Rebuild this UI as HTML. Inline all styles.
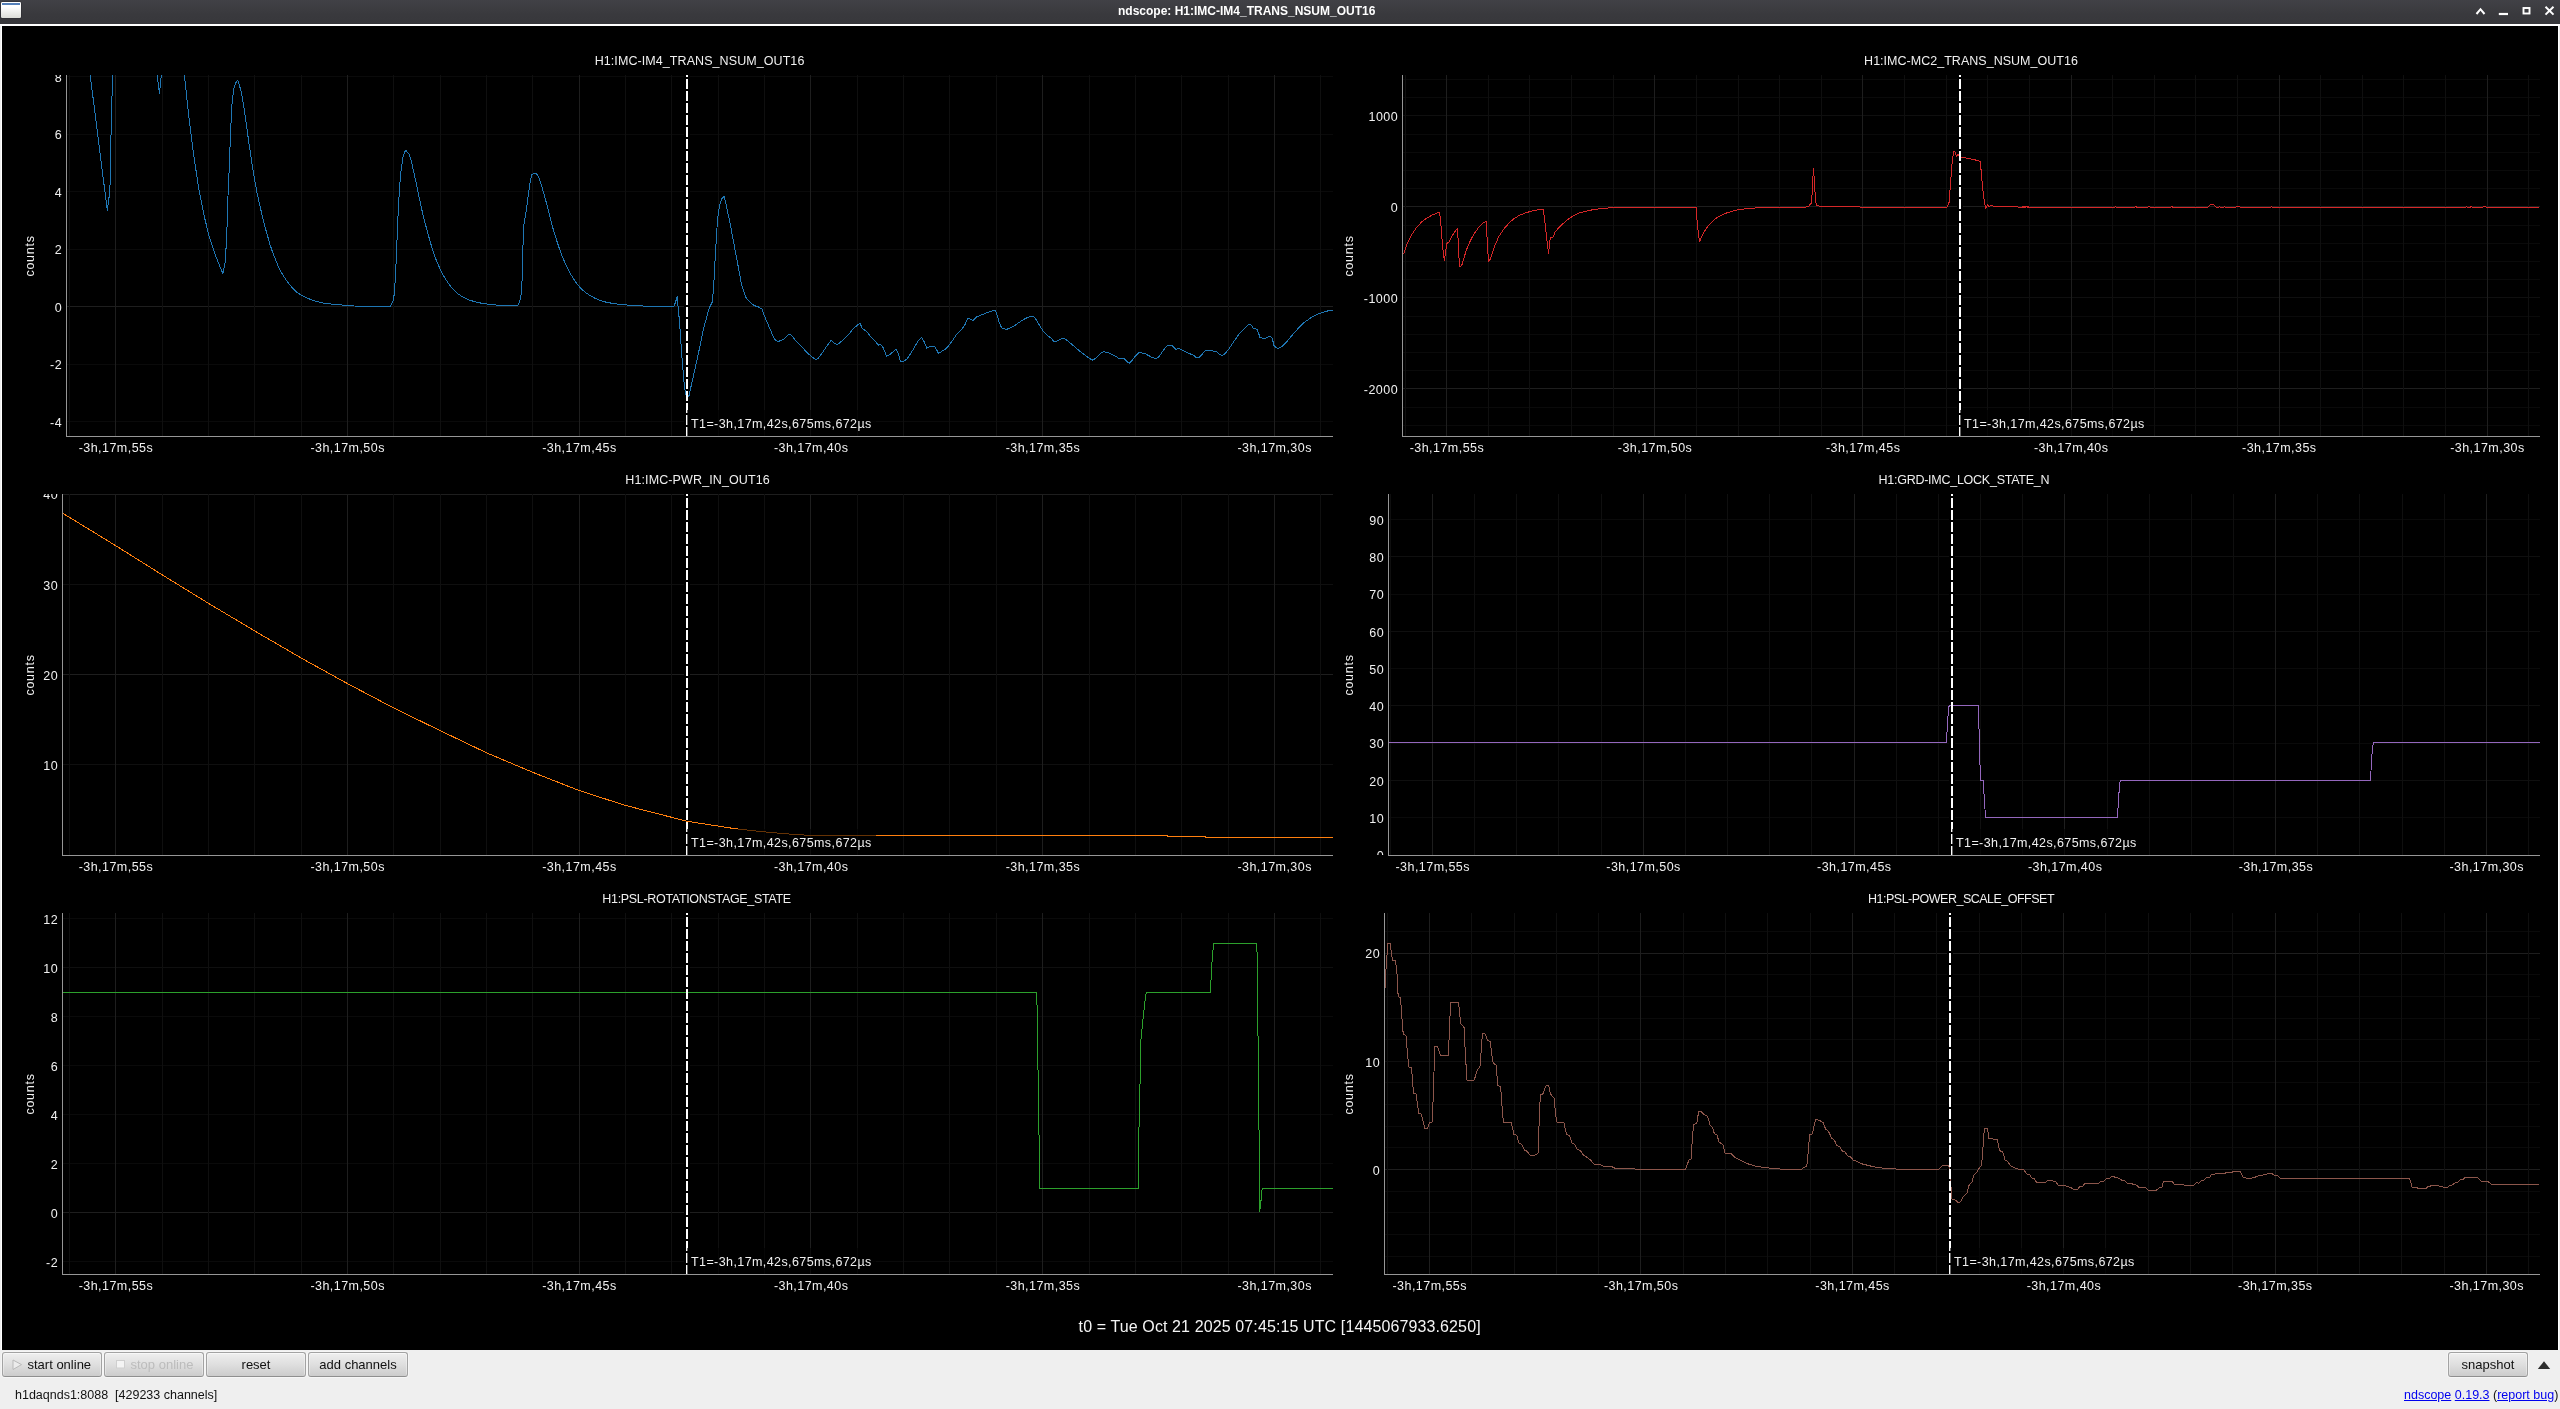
<!DOCTYPE html>
<html><head><meta charset="utf-8"><title>ndscope</title>
<style>
html,body{margin:0;padding:0}
body{width:2560px;height:1409px;position:relative;overflow:hidden;background:#efefef;font-family:"Liberation Sans", sans-serif;}
#tb{position:absolute;left:0;top:0;width:2560px;height:24px;background:linear-gradient(#414146,#39393d 60%,#37373b);}
#tbt{will-change:transform;position:absolute;left:1117.5px;top:0;height:24px;line-height:23px;white-space:nowrap;color:#fff;font-weight:bold;font-size:12px;letter-spacing:0px}
#wl{position:absolute;left:0;top:24px;width:2560px;height:2px;background:#fff}
#bl{position:absolute;left:1px;top:24px;width:1px;height:1326px;background:#fff}
#br{position:absolute;left:2558px;top:24px;width:1px;height:1326px;background:#fff}
#blk{position:absolute;left:2px;top:26px;width:2556px;height:1324px;background:#000}
.btn{will-change:transform;position:absolute;top:1352px;height:23px;border:1px solid #a3a3a3;border-bottom-color:#8f8f8f;border-radius:3px;background:linear-gradient(#efefef,#dedede 52%,#cccccc);box-shadow:inset 0 1px 0 #f8f8f8,inset 1px 0 0 rgba(255,255,255,.35),inset -1px 0 0 rgba(255,255,255,.35),0 0 0 1px rgba(255,255,255,.45);font-size:13px;color:#111;text-align:center;line-height:23px;white-space:nowrap}
.dis{color:#bcbcbc}
#st{will-change:transform;position:absolute;left:15px;top:1385px;font-size:12.5px;color:#111;white-space:pre;line-height:20px}
#lk{will-change:transform;position:absolute;right:2px;top:1385px;font-size:12.5px;color:#111;white-space:pre;line-height:20px}
#lk u{color:#0000ee}
</style></head><body>
<div id="tb"></div>
<svg style="position:absolute;left:0;top:0" width="40" height="24" viewBox="0 0 40 24">
<defs><linearGradient id="ig" x1="0" y1="0" x2="0" y2="1"><stop offset="0" stop-color="#fff"/><stop offset="0.3" stop-color="#fff"/><stop offset="1" stop-color="#dcddd8"/></linearGradient></defs>
<rect x="0.5" y="1.5" width="21" height="17" rx="1.5" fill="#2b2b30"/>
<rect x="1" y="2" width="20" height="16" rx="1.2" fill="url(#ig)"/>
<rect x="2" y="3" width="18" height="2" fill="#5580b9"/>
</svg>
<div id="tbt">ndscope: H1:IMC-IM4_TRANS_NSUM_OUT16</div>
<svg style="position:absolute;left:2470px;top:0" width="90" height="24" viewBox="2470 0 90 24" fill="none" stroke="#fff" stroke-width="2">
<path d="M2476.5 14 L2480.5 9.2 L2484.5 14"/>
<path d="M2498.8 14 H2508" stroke-width="2.2"/>
<rect x="2523.5" y="8" width="6" height="5.5" stroke-width="1.9"/>
<path d="M2545.5 6.7 L2553.5 14.6 M2553.5 6.7 L2545.5 14.6" stroke-width="2"/>
</svg>
<div id="wl"></div><div id="bl"></div><div id="br"></div>
<div id="blk"></div>
<svg width="2560" height="1409" viewBox="0 0 2560 1409" style="position:absolute;left:0;top:0;will-change:transform" font-family='"Liberation Sans", sans-serif'>
<defs>
<clipPath id="cp0"><rect x="67" y="75" width="1266" height="361"/></clipPath>
<clipPath id="ca0"><rect x="-4" y="75" width="70" height="361"/></clipPath>
<clipPath id="cp1"><rect x="63" y="494" width="1270" height="361"/></clipPath>
<clipPath id="ca1"><rect x="-8" y="494" width="70" height="361"/></clipPath>
<clipPath id="cp2"><rect x="63" y="913" width="1270" height="361"/></clipPath>
<clipPath id="ca2"><rect x="-8" y="913" width="70" height="361"/></clipPath>
<clipPath id="cp3"><rect x="1403" y="75" width="1137" height="361"/></clipPath>
<clipPath id="ca3"><rect x="1332" y="75" width="70" height="361"/></clipPath>
<clipPath id="cp4"><rect x="1389" y="494" width="1151" height="361"/></clipPath>
<clipPath id="ca4"><rect x="1318" y="494" width="70" height="361"/></clipPath>
<clipPath id="cp5"><rect x="1385" y="913" width="1155" height="361"/></clipPath>
<clipPath id="ca5"><rect x="1314" y="913" width="70" height="361"/></clipPath>
</defs>
<g shape-rendering="crispEdges">
<rect x="67" y="421" width="1266" height="1" fill="#0a0a0a"/>
<rect x="67" y="364" width="1266" height="1" fill="#0a0a0a"/>
<rect x="67" y="249" width="1266" height="1" fill="#0a0a0a"/>
<rect x="67" y="191" width="1266" height="1" fill="#0a0a0a"/>
<rect x="67" y="134" width="1266" height="1" fill="#0a0a0a"/>
<rect x="67" y="76" width="1266" height="1" fill="#0a0a0a"/>
<rect x="67" y="306" width="1266" height="1" fill="#1e1e1e"/>
<rect x="69" y="75" width="1" height="361" fill="#0f0f0f"/>
<rect x="115" y="75" width="1" height="361" fill="#1e1e1e"/>
<rect x="162" y="75" width="1" height="361" fill="#0f0f0f"/>
<rect x="208" y="75" width="1" height="361" fill="#0f0f0f"/>
<rect x="254" y="75" width="1" height="361" fill="#0f0f0f"/>
<rect x="301" y="75" width="1" height="361" fill="#0f0f0f"/>
<rect x="347" y="75" width="1" height="361" fill="#1e1e1e"/>
<rect x="393" y="75" width="1" height="361" fill="#0f0f0f"/>
<rect x="440" y="75" width="1" height="361" fill="#0f0f0f"/>
<rect x="486" y="75" width="1" height="361" fill="#0f0f0f"/>
<rect x="532" y="75" width="1" height="361" fill="#0f0f0f"/>
<rect x="579" y="75" width="1" height="361" fill="#1e1e1e"/>
<rect x="625" y="75" width="1" height="361" fill="#0f0f0f"/>
<rect x="671" y="75" width="1" height="361" fill="#0f0f0f"/>
<rect x="718" y="75" width="1" height="361" fill="#0f0f0f"/>
<rect x="764" y="75" width="1" height="361" fill="#0f0f0f"/>
<rect x="810" y="75" width="1" height="361" fill="#1e1e1e"/>
<rect x="857" y="75" width="1" height="361" fill="#0f0f0f"/>
<rect x="903" y="75" width="1" height="361" fill="#0f0f0f"/>
<rect x="949" y="75" width="1" height="361" fill="#0f0f0f"/>
<rect x="996" y="75" width="1" height="361" fill="#0f0f0f"/>
<rect x="1042" y="75" width="1" height="361" fill="#1e1e1e"/>
<rect x="1089" y="75" width="1" height="361" fill="#0f0f0f"/>
<rect x="1135" y="75" width="1" height="361" fill="#0f0f0f"/>
<rect x="1181" y="75" width="1" height="361" fill="#0f0f0f"/>
<rect x="1228" y="75" width="1" height="361" fill="#0f0f0f"/>
<rect x="1274" y="75" width="1" height="361" fill="#1e1e1e"/>
<rect x="1320" y="75" width="1" height="361" fill="#0f0f0f"/>
<rect x="684" y="75" width="6" height="361" fill="#000"/>
</g>
<g clip-path="url(#cp0)" fill="none" stroke="#1f77b4" stroke-width="1" shape-rendering="crispEdges" stroke-linejoin="bevel">
<polyline points="90.2,75.3 107.3,210.5 109.9,190.8 110.7,148.8 111.7,104.1 112.8,75.3"/>
<polyline points="157.1,75.3 159.5,93.6 161.3,75.3"/>
<polyline points="184.4,75.3 188.6,114.6 193.9,156.6 199.1,190.8 204.4,217.0 209.6,238.0 214.9,253.8 220.1,266.9 222.8,273.5 225.4,261.7 227.0,227.5 228.0,196.0 229.3,167.1 230.6,130.4 232.0,104.1 233.8,88.4 235.9,82.6 237.7,80.0 241.1,91.0 243.8,106.8 246.4,125.1 249.0,143.5 251.7,161.9 254.3,177.6 256.9,192.1 259.5,203.9 262.2,215.7 264.8,226.2 267.4,235.4 270.0,244.6 272.7,252.5 275.3,259.0 277.9,265.6 280.5,270.8 283.2,275.6 285.8,279.5 288.4,283.2 291.0,286.3 293.7,289.2 296.3,291.8 301.5,295.3 306.8,297.9 312.0,300.0 317.3,301.6 322.5,302.9 327.8,303.7 335.7,304.4 343.5,305.2 354.0,306.0 364.5,306.3 375.0,306.3 390.3,306.3 390.5,306.3 393.1,301.0 394.4,293.2 395.8,269.5 397.1,238.0 398.4,206.5 400.5,175.0 403.1,156.6 405.5,150.1 408.9,154.0 411.5,161.9 414.1,173.7 416.8,185.5 419.4,198.6 422.0,210.5 424.6,221.0 427.3,231.5 429.9,240.6 432.5,249.8 435.1,257.2 437.8,263.8 440.4,269.5 443.0,274.8 445.6,279.2 448.3,283.2 450.9,286.6 453.5,289.5 456.1,292.1 458.8,294.5 464.0,297.6 469.3,300.0 474.5,301.6 479.8,302.9 485.0,303.7 492.9,304.7 500.8,305.5 511.3,305.8 517.8,305.5 519.9,301.0 521.8,290.5 522.6,253.8 523.9,224.9 525.7,214.4 527.5,201.3 529.6,185.5 531.7,175.0 533.6,173.2 536.2,173.2 538.8,177.6 541.5,185.5 544.1,194.7 546.7,203.9 549.3,214.4 552.0,224.9 554.6,234.1 557.2,242.0 559.8,249.8 562.5,256.9 565.1,263.0 567.7,268.7 570.3,273.5 573.0,277.9 575.6,281.9 578.2,285.3 580.8,288.2 583.5,290.8 586.1,292.9 590.0,295.5 595.3,298.4 600.5,300.5 605.8,302.1 611.0,303.1 616.3,303.9 624.2,304.7 632.0,305.5 642.5,306.0 655.7,306.3 674.0,306.3 675.9,301.0 677.2,296.3 678.0,306.3 679.3,319.4 681.9,356.2 684.5,387.7 685.8,394.2 688.7,396.9 693.1,377.2 698.4,353.5 703.6,328.6 708.9,308.9 712.3,301.8 713.6,287.9 715.4,253.8 717.5,219.6 719.4,206.5 721.5,199.2 724.1,196.3 725.9,203.9 729.9,222.3 733.8,243.3 737.8,264.3 741.7,285.3 745.6,297.1 750.9,303.1 754.8,305.8 758.8,307.1 761.9,308.9 765.3,318.1 769.3,327.3 773.2,336.5 775.8,340.9 779.2,341.2 783.7,339.1 789.0,333.8 791.6,335.2 795.5,340.4 800.8,345.7 807.3,353.0 811.3,356.2 815.2,359.3 817.8,358.8 821.8,353.5 827.0,345.7 831.0,340.4 834.9,343.6 837.5,344.4 842.8,340.4 848.0,335.2 853.3,328.6 859.8,323.1 862.5,328.6 866.4,331.2 871.7,337.8 875.6,341.7 878.2,345.1 880.8,344.4 883.5,348.3 886.6,356.2 890.0,354.3 892.7,352.2 895.8,349.1 897.9,352.2 900.5,361.4 903.2,361.9 907.1,358.8 912.3,350.9 917.6,341.7 921.5,337.3 924.2,341.7 926.8,348.3 930.7,346.2 934.7,346.2 938.6,353.5 942.5,350.9 946.5,348.3 951.7,341.7 957.0,333.8 962.2,328.6 964.9,324.7 968.0,318.1 970.1,318.9 972.7,320.7 976.7,316.8 981.9,314.7 988.5,312.1 995.0,310.2 996.9,314.2 999.0,322.0 1001.6,327.8 1002.6,328.6 1006.6,329.4 1011.8,327.3 1017.1,323.9 1022.3,320.2 1026.3,318.1 1030.2,316.3 1033.6,316.3 1036.8,320.7 1039.4,325.2 1043.3,331.2 1047.3,335.2 1051.2,338.3 1053.8,341.2 1056.4,341.2 1059.9,339.6 1063.0,338.3 1065.6,339.1 1069.6,342.5 1073.5,345.7 1078.8,350.4 1084.0,354.3 1089.3,358.3 1092.4,360.1 1095.0,358.8 1098.5,355.4 1101.1,352.8 1103.7,351.7 1107.6,352.5 1111.6,354.3 1115.5,356.2 1119.5,358.8 1122.9,358.8 1123.9,358.3 1126.0,360.6 1129.2,363.3 1131.8,360.9 1135.2,356.2 1138.6,352.8 1141.8,353.0 1144.9,353.5 1148.3,355.4 1152.3,357.5 1155.7,358.8 1158.3,357.5 1161.5,353.0 1164.9,348.3 1167.5,345.7 1170.1,345.1 1172.0,345.7 1174.6,348.3 1176.4,349.6 1178.5,348.3 1181.1,349.6 1185.1,351.7 1189.0,353.5 1193.0,354.9 1196.9,358.0 1199.5,357.0 1202.2,354.3 1204.8,350.9 1207.4,350.1 1211.3,350.4 1214.0,351.2 1216.6,351.4 1219.2,354.1 1221.8,355.6 1224.5,354.1 1228.4,349.6 1233.7,341.7 1238.9,334.4 1244.2,328.6 1248.9,324.1 1251.5,325.4 1253.3,328.6 1256.8,329.1 1258.6,333.3 1259.9,337.3 1262.5,338.3 1265.7,338.3 1268.3,336.7 1270.9,336.5 1272.5,339.1 1273.8,345.1 1276.2,347.8 1278.3,348.3 1282.2,346.2 1287.5,340.9 1292.7,334.6 1298.0,328.6 1303.2,323.3 1308.5,319.4 1313.7,316.0 1319.0,313.6 1325.5,311.5 1329.5,310.5 1332.9,310.2"/>
</g>
<g clip-path="url(#cp0)"><line x1="687" y1="67" x2="687" y2="436" stroke="#fff" stroke-width="2" stroke-dasharray="10 2" shape-rendering="crispEdges"/>
<rect x="687" y="410" width="189" height="26" fill="#000" fill-opacity="0.6"/></g>
<text x="691" y="428.4" font-size="12.5" fill="#f0f0f0" textLength="180.3" lengthAdjust="spacing">T1=-3h,17m,42s,675ms,672µs</text>
<rect x="66" y="75" width="1" height="362" fill="#969696" shape-rendering="crispEdges"/>
<rect x="66" y="436" width="1267" height="1" fill="#969696" shape-rendering="crispEdges"/>
<g clip-path="url(#ca0)" font-size="12.5" fill="#f0f0f0" text-anchor="end" letter-spacing="0.45">
<text x="62.1" y="81.9">8</text>
<text x="62.1" y="139.4">6</text>
<text x="62.1" y="196.9">4</text>
<text x="62.1" y="254.4">2</text>
<text x="62.1" y="311.9">0</text>
<text x="62.1" y="369.4">-2</text>
<text x="62.1" y="426.9">-4</text>
</g>
<g font-size="12.5" fill="#f0f0f0" text-anchor="middle">
<text x="115.7" y="452" textLength="74" lengthAdjust="spacing">-3h,17m,55s</text>
<text x="347.4" y="452" textLength="74" lengthAdjust="spacing">-3h,17m,50s</text>
<text x="579.2" y="452" textLength="74" lengthAdjust="spacing">-3h,17m,45s</text>
<text x="810.9" y="452" textLength="74" lengthAdjust="spacing">-3h,17m,40s</text>
<text x="1042.7" y="452" textLength="74" lengthAdjust="spacing">-3h,17m,35s</text>
<text x="1274.4" y="452" textLength="74" lengthAdjust="spacing">-3h,17m,30s</text>
</g>
<text x="699.5" y="64.9" font-size="12.5" fill="#f0f0f0" text-anchor="middle" textLength="209.7" lengthAdjust="spacing">H1:IMC-IM4_TRANS_NSUM_OUT16</text>
<text transform="translate(34,256.3) rotate(-90)" font-size="12.5" fill="#f0f0f0" text-anchor="middle" textLength="40.5" lengthAdjust="spacing">counts</text>
<g shape-rendering="crispEdges">
<rect x="63" y="764" width="1270" height="1" fill="#0f0f0f"/>
<rect x="63" y="584" width="1270" height="1" fill="#0f0f0f"/>
<rect x="63" y="674" width="1270" height="1" fill="#1e1e1e"/>
<rect x="63" y="494" width="1270" height="1" fill="#1e1e1e"/>
<rect x="69" y="494" width="1" height="361" fill="#0f0f0f"/>
<rect x="115" y="494" width="1" height="361" fill="#1e1e1e"/>
<rect x="162" y="494" width="1" height="361" fill="#0f0f0f"/>
<rect x="208" y="494" width="1" height="361" fill="#0f0f0f"/>
<rect x="254" y="494" width="1" height="361" fill="#0f0f0f"/>
<rect x="301" y="494" width="1" height="361" fill="#0f0f0f"/>
<rect x="347" y="494" width="1" height="361" fill="#1e1e1e"/>
<rect x="393" y="494" width="1" height="361" fill="#0f0f0f"/>
<rect x="440" y="494" width="1" height="361" fill="#0f0f0f"/>
<rect x="486" y="494" width="1" height="361" fill="#0f0f0f"/>
<rect x="532" y="494" width="1" height="361" fill="#0f0f0f"/>
<rect x="579" y="494" width="1" height="361" fill="#1e1e1e"/>
<rect x="625" y="494" width="1" height="361" fill="#0f0f0f"/>
<rect x="671" y="494" width="1" height="361" fill="#0f0f0f"/>
<rect x="718" y="494" width="1" height="361" fill="#0f0f0f"/>
<rect x="764" y="494" width="1" height="361" fill="#0f0f0f"/>
<rect x="810" y="494" width="1" height="361" fill="#1e1e1e"/>
<rect x="857" y="494" width="1" height="361" fill="#0f0f0f"/>
<rect x="903" y="494" width="1" height="361" fill="#0f0f0f"/>
<rect x="949" y="494" width="1" height="361" fill="#0f0f0f"/>
<rect x="996" y="494" width="1" height="361" fill="#0f0f0f"/>
<rect x="1042" y="494" width="1" height="361" fill="#1e1e1e"/>
<rect x="1089" y="494" width="1" height="361" fill="#0f0f0f"/>
<rect x="1135" y="494" width="1" height="361" fill="#0f0f0f"/>
<rect x="1181" y="494" width="1" height="361" fill="#0f0f0f"/>
<rect x="1228" y="494" width="1" height="361" fill="#0f0f0f"/>
<rect x="1274" y="494" width="1" height="361" fill="#1e1e1e"/>
<rect x="1320" y="494" width="1" height="361" fill="#0f0f0f"/>
<rect x="684" y="494" width="6" height="361" fill="#000"/>
</g>
<g clip-path="url(#cp1)" fill="none" stroke="#ff7f0e" stroke-width="1" shape-rendering="crispEdges" stroke-linejoin="bevel">
<polyline points="62.7,513.2 115.6,545.6 162.4,575.0 208.3,603.2 254.6,630.9 301.1,658.0 347.3,683.5 393.5,707.9 440.1,730.6 486.3,752.7 532.2,772.1 579.3,790.6 625.0,805.3 671.2,817.2 686.5,821.1 700.0,823.3 735.0,828.7 764.3,831.9 790.4,834.1 811.0,835.5 1167.0,835.5 1168.0,836.5 1205.0,836.5 1206.0,837.5 1333.0,837.5"/>
</g>
<g clip-path="url(#cp1)"><line x1="687" y1="486" x2="687" y2="855" stroke="#fff" stroke-width="2" stroke-dasharray="10 2" shape-rendering="crispEdges"/>
<rect x="687" y="829" width="189" height="26" fill="#000" fill-opacity="0.6"/></g>
<text x="691" y="847.4" font-size="12.5" fill="#f0f0f0" textLength="180.3" lengthAdjust="spacing">T1=-3h,17m,42s,675ms,672µs</text>
<rect x="62" y="494" width="1" height="362" fill="#969696" shape-rendering="crispEdges"/>
<rect x="62" y="855" width="1271" height="1" fill="#969696" shape-rendering="crispEdges"/>
<g clip-path="url(#ca1)" font-size="12.5" fill="#f0f0f0" text-anchor="end" letter-spacing="0.45">
<text x="58.1" y="499.4">40</text>
<text x="58.1" y="589.6">30</text>
<text x="58.1" y="679.8">20</text>
<text x="58.1" y="770.0">10</text>
</g>
<g font-size="12.5" fill="#f0f0f0" text-anchor="middle">
<text x="115.7" y="871" textLength="74" lengthAdjust="spacing">-3h,17m,55s</text>
<text x="347.4" y="871" textLength="74" lengthAdjust="spacing">-3h,17m,50s</text>
<text x="579.2" y="871" textLength="74" lengthAdjust="spacing">-3h,17m,45s</text>
<text x="810.9" y="871" textLength="74" lengthAdjust="spacing">-3h,17m,40s</text>
<text x="1042.7" y="871" textLength="74" lengthAdjust="spacing">-3h,17m,35s</text>
<text x="1274.4" y="871" textLength="74" lengthAdjust="spacing">-3h,17m,30s</text>
</g>
<text x="697.5" y="483.9" font-size="12.5" fill="#f0f0f0" text-anchor="middle" textLength="144.5" lengthAdjust="spacing">H1:IMC-PWR_IN_OUT16</text>
<text transform="translate(34,675.3) rotate(-90)" font-size="12.5" fill="#f0f0f0" text-anchor="middle" textLength="40.5" lengthAdjust="spacing">counts</text>
<g shape-rendering="crispEdges">
<rect x="63" y="1261" width="1270" height="1" fill="#0a0a0a"/>
<rect x="63" y="1163" width="1270" height="1" fill="#0a0a0a"/>
<rect x="63" y="1114" width="1270" height="1" fill="#0a0a0a"/>
<rect x="63" y="1065" width="1270" height="1" fill="#0a0a0a"/>
<rect x="63" y="1016" width="1270" height="1" fill="#0a0a0a"/>
<rect x="63" y="918" width="1270" height="1" fill="#0a0a0a"/>
<rect x="63" y="967" width="1270" height="1" fill="#0f0f0f"/>
<rect x="63" y="1212" width="1270" height="1" fill="#1e1e1e"/>
<rect x="69" y="913" width="1" height="361" fill="#0f0f0f"/>
<rect x="115" y="913" width="1" height="361" fill="#1e1e1e"/>
<rect x="162" y="913" width="1" height="361" fill="#0f0f0f"/>
<rect x="208" y="913" width="1" height="361" fill="#0f0f0f"/>
<rect x="254" y="913" width="1" height="361" fill="#0f0f0f"/>
<rect x="301" y="913" width="1" height="361" fill="#0f0f0f"/>
<rect x="347" y="913" width="1" height="361" fill="#1e1e1e"/>
<rect x="393" y="913" width="1" height="361" fill="#0f0f0f"/>
<rect x="440" y="913" width="1" height="361" fill="#0f0f0f"/>
<rect x="486" y="913" width="1" height="361" fill="#0f0f0f"/>
<rect x="532" y="913" width="1" height="361" fill="#0f0f0f"/>
<rect x="579" y="913" width="1" height="361" fill="#1e1e1e"/>
<rect x="625" y="913" width="1" height="361" fill="#0f0f0f"/>
<rect x="671" y="913" width="1" height="361" fill="#0f0f0f"/>
<rect x="718" y="913" width="1" height="361" fill="#0f0f0f"/>
<rect x="764" y="913" width="1" height="361" fill="#0f0f0f"/>
<rect x="810" y="913" width="1" height="361" fill="#1e1e1e"/>
<rect x="857" y="913" width="1" height="361" fill="#0f0f0f"/>
<rect x="903" y="913" width="1" height="361" fill="#0f0f0f"/>
<rect x="949" y="913" width="1" height="361" fill="#0f0f0f"/>
<rect x="996" y="913" width="1" height="361" fill="#0f0f0f"/>
<rect x="1042" y="913" width="1" height="361" fill="#1e1e1e"/>
<rect x="1089" y="913" width="1" height="361" fill="#0f0f0f"/>
<rect x="1135" y="913" width="1" height="361" fill="#0f0f0f"/>
<rect x="1181" y="913" width="1" height="361" fill="#0f0f0f"/>
<rect x="1228" y="913" width="1" height="361" fill="#0f0f0f"/>
<rect x="1274" y="913" width="1" height="361" fill="#1e1e1e"/>
<rect x="1320" y="913" width="1" height="361" fill="#0f0f0f"/>
<rect x="684" y="913" width="6" height="361" fill="#000"/>
</g>
<g clip-path="url(#cp2)" fill="none" stroke="#2ca02c" stroke-width="1" shape-rendering="crispEdges" stroke-linejoin="bevel">
<polyline points="61.4,992.1 1036.4,992.1 1037.3,1010.7 1038.1,1077.1 1039.2,1146.3 1039.5,1188.3 1138.3,1188.3 1138.6,1143.5 1139.9,1090.9 1140.8,1041.1 1143.3,1016.2 1145.2,999.6 1146.3,992.1 1210.5,992.1 1211.6,966.4 1213.3,947.0 1213.8,943.4 1256.4,943.4 1257.5,958.1 1258.1,1049.4 1259.2,1146.3 1259.7,1212.1 1260.9,1201.6 1262.2,1188.3 1332.8,1188.3"/>
</g>
<g clip-path="url(#cp2)"><line x1="687" y1="905" x2="687" y2="1274" stroke="#fff" stroke-width="2" stroke-dasharray="10 2" shape-rendering="crispEdges"/>
<rect x="687" y="1248" width="189" height="26" fill="#000" fill-opacity="0.6"/></g>
<text x="691" y="1266.4" font-size="12.5" fill="#f0f0f0" textLength="180.3" lengthAdjust="spacing">T1=-3h,17m,42s,675ms,672µs</text>
<rect x="62" y="913" width="1" height="362" fill="#969696" shape-rendering="crispEdges"/>
<rect x="62" y="1274" width="1271" height="1" fill="#969696" shape-rendering="crispEdges"/>
<g clip-path="url(#ca2)" font-size="12.5" fill="#f0f0f0" text-anchor="end" letter-spacing="0.45">
<text x="58.1" y="923.9">12</text>
<text x="58.1" y="972.9">10</text>
<text x="58.1" y="1021.9">8</text>
<text x="58.1" y="1070.9">6</text>
<text x="58.1" y="1119.9">4</text>
<text x="58.1" y="1168.9">2</text>
<text x="58.1" y="1217.9">0</text>
<text x="58.1" y="1266.9">-2</text>
</g>
<g font-size="12.5" fill="#f0f0f0" text-anchor="middle">
<text x="115.7" y="1290" textLength="74" lengthAdjust="spacing">-3h,17m,55s</text>
<text x="347.4" y="1290" textLength="74" lengthAdjust="spacing">-3h,17m,50s</text>
<text x="579.2" y="1290" textLength="74" lengthAdjust="spacing">-3h,17m,45s</text>
<text x="810.9" y="1290" textLength="74" lengthAdjust="spacing">-3h,17m,40s</text>
<text x="1042.7" y="1290" textLength="74" lengthAdjust="spacing">-3h,17m,35s</text>
<text x="1274.4" y="1290" textLength="74" lengthAdjust="spacing">-3h,17m,30s</text>
</g>
<text x="696.7" y="902.9" font-size="12.5" fill="#f0f0f0" text-anchor="middle" textLength="188.8" lengthAdjust="spacing">H1:PSL-ROTATIONSTAGE_STATE</text>
<text transform="translate(34,1094.3) rotate(-90)" font-size="12.5" fill="#f0f0f0" text-anchor="middle" textLength="40.5" lengthAdjust="spacing">counts</text>
<g shape-rendering="crispEdges">
<rect x="1403" y="425" width="1137" height="1" fill="#0a0a0a"/>
<rect x="1403" y="407" width="1137" height="1" fill="#0a0a0a"/>
<rect x="1403" y="370" width="1137" height="1" fill="#0a0a0a"/>
<rect x="1403" y="352" width="1137" height="1" fill="#0a0a0a"/>
<rect x="1403" y="334" width="1137" height="1" fill="#0a0a0a"/>
<rect x="1403" y="316" width="1137" height="1" fill="#0a0a0a"/>
<rect x="1403" y="279" width="1137" height="1" fill="#0a0a0a"/>
<rect x="1403" y="261" width="1137" height="1" fill="#0a0a0a"/>
<rect x="1403" y="243" width="1137" height="1" fill="#0a0a0a"/>
<rect x="1403" y="225" width="1137" height="1" fill="#0a0a0a"/>
<rect x="1403" y="188" width="1137" height="1" fill="#0a0a0a"/>
<rect x="1403" y="170" width="1137" height="1" fill="#0a0a0a"/>
<rect x="1403" y="152" width="1137" height="1" fill="#0a0a0a"/>
<rect x="1403" y="134" width="1137" height="1" fill="#0a0a0a"/>
<rect x="1403" y="97" width="1137" height="1" fill="#0a0a0a"/>
<rect x="1403" y="79" width="1137" height="1" fill="#0a0a0a"/>
<rect x="1403" y="115" width="1137" height="1" fill="#0f0f0f"/>
<rect x="1403" y="297" width="1137" height="1" fill="#0f0f0f"/>
<rect x="1403" y="206" width="1137" height="1" fill="#1e1e1e"/>
<rect x="1403" y="388" width="1137" height="1" fill="#1e1e1e"/>
<rect x="1405" y="75" width="1" height="361" fill="#0f0f0f"/>
<rect x="1446" y="75" width="1" height="361" fill="#1e1e1e"/>
<rect x="1488" y="75" width="1" height="361" fill="#0f0f0f"/>
<rect x="1529" y="75" width="1" height="361" fill="#0f0f0f"/>
<rect x="1571" y="75" width="1" height="361" fill="#0f0f0f"/>
<rect x="1613" y="75" width="1" height="361" fill="#0f0f0f"/>
<rect x="1654" y="75" width="1" height="361" fill="#1e1e1e"/>
<rect x="1696" y="75" width="1" height="361" fill="#0f0f0f"/>
<rect x="1738" y="75" width="1" height="361" fill="#0f0f0f"/>
<rect x="1779" y="75" width="1" height="361" fill="#0f0f0f"/>
<rect x="1821" y="75" width="1" height="361" fill="#0f0f0f"/>
<rect x="1862" y="75" width="1" height="361" fill="#1e1e1e"/>
<rect x="1904" y="75" width="1" height="361" fill="#0f0f0f"/>
<rect x="1946" y="75" width="1" height="361" fill="#0f0f0f"/>
<rect x="1987" y="75" width="1" height="361" fill="#0f0f0f"/>
<rect x="2029" y="75" width="1" height="361" fill="#0f0f0f"/>
<rect x="2071" y="75" width="1" height="361" fill="#1e1e1e"/>
<rect x="2112" y="75" width="1" height="361" fill="#0f0f0f"/>
<rect x="2154" y="75" width="1" height="361" fill="#0f0f0f"/>
<rect x="2195" y="75" width="1" height="361" fill="#0f0f0f"/>
<rect x="2237" y="75" width="1" height="361" fill="#0f0f0f"/>
<rect x="2279" y="75" width="1" height="361" fill="#1e1e1e"/>
<rect x="2320" y="75" width="1" height="361" fill="#0f0f0f"/>
<rect x="2362" y="75" width="1" height="361" fill="#0f0f0f"/>
<rect x="2403" y="75" width="1" height="361" fill="#0f0f0f"/>
<rect x="2445" y="75" width="1" height="361" fill="#0f0f0f"/>
<rect x="2487" y="75" width="1" height="361" fill="#1e1e1e"/>
<rect x="2528" y="75" width="1" height="361" fill="#0f0f0f"/>
<rect x="1957" y="75" width="6" height="361" fill="#000"/>
</g>
<g clip-path="url(#cp3)" fill="none" stroke="#d62728" stroke-width="1" shape-rendering="crispEdges" stroke-linejoin="bevel">
<polyline points="1403.7,253.8 1406.8,244.6 1410.8,236.2 1416.0,228.3 1421.3,222.3 1426.5,218.3 1431.8,215.2 1437.0,213.1 1439.6,212.3 1440.9,224.9 1442.8,248.5 1444.4,260.9 1445.7,251.1 1446.7,243.3 1448.8,242.5 1450.9,238.0 1454.1,232.8 1457.5,228.3 1458.3,243.3 1459.3,264.3 1460.1,266.9 1461.9,264.8 1463.8,259.0 1465.9,251.1 1469.8,242.0 1473.8,234.1 1479.0,227.0 1482.9,223.1 1486.1,221.2 1487.2,240.6 1488.5,261.7 1490.0,259.6 1492.1,253.8 1494.8,245.9 1498.7,236.7 1504.0,228.8 1509.2,222.8 1514.5,218.3 1519.7,215.2 1526.3,212.6 1534.1,210.5 1543.3,209.1 1544.6,219.6 1546.7,238.0 1548.6,253.8 1549.4,244.6 1550.4,237.5 1553.3,237.0 1555.1,232.0 1557.8,228.8 1563.0,223.6 1568.3,219.1 1573.5,215.7 1578.8,213.1 1586.7,211.0 1594.5,209.4 1602.4,208.4 1612.9,207.6 1631.3,207.3 1657.5,207.3 1696.1,207.3 1697.4,224.9 1699.5,242.0 1700.9,238.0 1703.5,232.8 1707.4,227.0 1711.4,222.3 1716.6,217.8 1721.9,214.9 1727.1,212.8 1731.0,211.8 1734.1,210.5 1744.6,208.9 1757.8,207.8 1778.8,207.3 1805.0,207.3 1809.0,206.0 1811.6,202.6 1812.4,188.1 1813.4,167.7 1814.5,182.9 1815.5,201.3 1816.8,205.2 1820.8,206.5 1857.5,206.5 1861.5,207.3 1946.8,207.3 1948.9,203.9 1950.2,188.1 1952.0,164.5 1953.6,150.9 1954.7,151.4 1956.5,156.6 1958.1,154.5 1959.9,157.2 1965.2,157.9 1973.0,159.3 1978.3,160.8 1980.4,161.9 1981.7,177.6 1983.5,196.0 1985.6,209.1 1987.5,204.7 1988.8,207.0 1990.9,205.2 1994.0,206.5 2015.0,206.8 2022.9,207.3 2026.3,206.3 2029.5,207.3 2040.0,207.3 2021.9,206.9 2022.8,207.5 2025.2,207.5 2026.0,206.4 2027.6,206.4 2028.4,207.3 2114.9,207.3 2115.5,206.4 2116.4,207.3 2134.5,207.3 2135.6,206.4 2137.0,207.3 2147.7,207.3 2149.0,206.4 2150.3,207.3 2170.6,207.3 2171.7,206.4 2173.0,207.3 2207.8,207.3 2210.0,205.1 2212.2,204.3 2214.0,204.9 2216.6,207.3 2218.8,207.3 2219.4,206.4 2220.3,207.3 2223.6,207.3 2224.5,206.4 2225.3,207.3 2235.8,207.3 2237.1,206.4 2239.3,206.4 2240.2,207.3 2270.6,207.3 2271.3,206.4 2272.2,207.3 2465.5,207.3 2466.4,206.4 2467.5,207.3 2470.4,207.3 2471.2,206.4 2472.1,207.3 2482.4,207.3 2483.5,206.4 2485.2,206.4 2486.3,207.3 2539.3,207.3"/>
</g>
<g clip-path="url(#cp3)"><line x1="1960" y1="67" x2="1960" y2="436" stroke="#fff" stroke-width="2" stroke-dasharray="10 2" shape-rendering="crispEdges"/>
<rect x="1960" y="410" width="189" height="26" fill="#000" fill-opacity="0.6"/></g>
<text x="1964" y="428.4" font-size="12.5" fill="#f0f0f0" textLength="180.3" lengthAdjust="spacing">T1=-3h,17m,42s,675ms,672µs</text>
<rect x="1402" y="75" width="1" height="362" fill="#969696" shape-rendering="crispEdges"/>
<rect x="1402" y="436" width="1138" height="1" fill="#969696" shape-rendering="crispEdges"/>
<g clip-path="url(#ca3)" font-size="12.5" fill="#f0f0f0" text-anchor="end" letter-spacing="0.45">
<text x="1398.1" y="121.0">1000</text>
<text x="1398.1" y="212.0">0</text>
<text x="1398.1" y="303.0">-1000</text>
<text x="1398.1" y="394.0">-2000</text>
</g>
<g font-size="12.5" fill="#f0f0f0" text-anchor="middle">
<text x="1446.7" y="452" textLength="74" lengthAdjust="spacing">-3h,17m,55s</text>
<text x="1654.8" y="452" textLength="74" lengthAdjust="spacing">-3h,17m,50s</text>
<text x="1862.9" y="452" textLength="74" lengthAdjust="spacing">-3h,17m,45s</text>
<text x="2071.0" y="452" textLength="74" lengthAdjust="spacing">-3h,17m,40s</text>
<text x="2279.1" y="452" textLength="74" lengthAdjust="spacing">-3h,17m,35s</text>
<text x="2487.2" y="452" textLength="74" lengthAdjust="spacing">-3h,17m,30s</text>
</g>
<text x="1971.0" y="64.9" font-size="12.5" fill="#f0f0f0" text-anchor="middle" textLength="213.8" lengthAdjust="spacing">H1:IMC-MC2_TRANS_NSUM_OUT16</text>
<text transform="translate(1353,256.3) rotate(-90)" font-size="12.5" fill="#f0f0f0" text-anchor="middle" textLength="40.5" lengthAdjust="spacing">counts</text>
<g shape-rendering="crispEdges">
<rect x="1389" y="817" width="1151" height="1" fill="#0a0a0a"/>
<rect x="1389" y="743" width="1151" height="1" fill="#0a0a0a"/>
<rect x="1389" y="668" width="1151" height="1" fill="#0a0a0a"/>
<rect x="1389" y="594" width="1151" height="1" fill="#0a0a0a"/>
<rect x="1389" y="519" width="1151" height="1" fill="#0a0a0a"/>
<rect x="1389" y="780" width="1151" height="1" fill="#0f0f0f"/>
<rect x="1389" y="705" width="1151" height="1" fill="#0f0f0f"/>
<rect x="1389" y="631" width="1151" height="1" fill="#0f0f0f"/>
<rect x="1389" y="556" width="1151" height="1" fill="#0f0f0f"/>
<rect x="1390" y="494" width="1" height="361" fill="#0f0f0f"/>
<rect x="1432" y="494" width="1" height="361" fill="#1e1e1e"/>
<rect x="1474" y="494" width="1" height="361" fill="#0f0f0f"/>
<rect x="1516" y="494" width="1" height="361" fill="#0f0f0f"/>
<rect x="1558" y="494" width="1" height="361" fill="#0f0f0f"/>
<rect x="1601" y="494" width="1" height="361" fill="#0f0f0f"/>
<rect x="1643" y="494" width="1" height="361" fill="#1e1e1e"/>
<rect x="1685" y="494" width="1" height="361" fill="#0f0f0f"/>
<rect x="1727" y="494" width="1" height="361" fill="#0f0f0f"/>
<rect x="1769" y="494" width="1" height="361" fill="#0f0f0f"/>
<rect x="1811" y="494" width="1" height="361" fill="#0f0f0f"/>
<rect x="1854" y="494" width="1" height="361" fill="#1e1e1e"/>
<rect x="1896" y="494" width="1" height="361" fill="#0f0f0f"/>
<rect x="1938" y="494" width="1" height="361" fill="#0f0f0f"/>
<rect x="1980" y="494" width="1" height="361" fill="#0f0f0f"/>
<rect x="2022" y="494" width="1" height="361" fill="#0f0f0f"/>
<rect x="2064" y="494" width="1" height="361" fill="#1e1e1e"/>
<rect x="2107" y="494" width="1" height="361" fill="#0f0f0f"/>
<rect x="2149" y="494" width="1" height="361" fill="#0f0f0f"/>
<rect x="2191" y="494" width="1" height="361" fill="#0f0f0f"/>
<rect x="2233" y="494" width="1" height="361" fill="#0f0f0f"/>
<rect x="2275" y="494" width="1" height="361" fill="#1e1e1e"/>
<rect x="2317" y="494" width="1" height="361" fill="#0f0f0f"/>
<rect x="2359" y="494" width="1" height="361" fill="#0f0f0f"/>
<rect x="2402" y="494" width="1" height="361" fill="#0f0f0f"/>
<rect x="2444" y="494" width="1" height="361" fill="#0f0f0f"/>
<rect x="2486" y="494" width="1" height="361" fill="#1e1e1e"/>
<rect x="2528" y="494" width="1" height="361" fill="#0f0f0f"/>
<rect x="1949" y="494" width="6" height="361" fill="#000"/>
</g>
<g clip-path="url(#cp4)" fill="none" stroke="#9467bd" stroke-width="1" shape-rendering="crispEdges" stroke-linejoin="bevel">
<polyline points="1387.9,742.4 1946.4,742.4 1947.5,723.6 1948.6,707.0 1949.7,705.6 1978.5,705.6 1979.1,733.3 1979.9,762.3 1980.7,780.3 1983.2,780.3 1984.3,798.3 1985.5,817.1 2117.5,817.1 2118.6,798.3 2119.7,783.1 2120.8,780.3 2370.5,780.3 2371.6,759.5 2372.7,745.7 2373.8,742.4 2539.8,742.4"/>
</g>
<g clip-path="url(#cp4)"><line x1="1952" y1="486" x2="1952" y2="855" stroke="#fff" stroke-width="2" stroke-dasharray="10 2" shape-rendering="crispEdges"/>
<rect x="1952" y="829" width="189" height="26" fill="#000" fill-opacity="0.6"/></g>
<text x="1956" y="847.4" font-size="12.5" fill="#f0f0f0" textLength="180.3" lengthAdjust="spacing">T1=-3h,17m,42s,675ms,672µs</text>
<rect x="1388" y="494" width="1" height="362" fill="#969696" shape-rendering="crispEdges"/>
<rect x="1388" y="855" width="1152" height="1" fill="#969696" shape-rendering="crispEdges"/>
<g clip-path="url(#ca4)" font-size="12.5" fill="#f0f0f0" text-anchor="end" letter-spacing="0.45">
<text x="1384.1" y="524.7">90</text>
<text x="1384.1" y="562.0">80</text>
<text x="1384.1" y="599.3">70</text>
<text x="1384.1" y="636.6">60</text>
<text x="1384.1" y="673.9">50</text>
<text x="1384.1" y="711.1">40</text>
<text x="1384.1" y="748.4">30</text>
<text x="1384.1" y="785.7">20</text>
<text x="1384.1" y="823.0">10</text>
<text x="1384.1" y="860.3">0</text>
</g>
<g font-size="12.5" fill="#f0f0f0" text-anchor="middle">
<text x="1432.5" y="871" textLength="74" lengthAdjust="spacing">-3h,17m,55s</text>
<text x="1643.3" y="871" textLength="74" lengthAdjust="spacing">-3h,17m,50s</text>
<text x="1854.1" y="871" textLength="74" lengthAdjust="spacing">-3h,17m,45s</text>
<text x="2064.9" y="871" textLength="74" lengthAdjust="spacing">-3h,17m,40s</text>
<text x="2275.7" y="871" textLength="74" lengthAdjust="spacing">-3h,17m,35s</text>
<text x="2486.5" y="871" textLength="74" lengthAdjust="spacing">-3h,17m,30s</text>
</g>
<text x="1964.0" y="483.9" font-size="12.5" fill="#f0f0f0" text-anchor="middle" textLength="171" lengthAdjust="spacing">H1:GRD-IMC_LOCK_STATE_N</text>
<text transform="translate(1353,675.3) rotate(-90)" font-size="12.5" fill="#f0f0f0" text-anchor="middle" textLength="40.5" lengthAdjust="spacing">counts</text>
<g shape-rendering="crispEdges">
<rect x="1385" y="1256" width="1155" height="1" fill="#0a0a0a"/>
<rect x="1385" y="1234" width="1155" height="1" fill="#0a0a0a"/>
<rect x="1385" y="1212" width="1155" height="1" fill="#0a0a0a"/>
<rect x="1385" y="1191" width="1155" height="1" fill="#0a0a0a"/>
<rect x="1385" y="1147" width="1155" height="1" fill="#0a0a0a"/>
<rect x="1385" y="1126" width="1155" height="1" fill="#0a0a0a"/>
<rect x="1385" y="1104" width="1155" height="1" fill="#0a0a0a"/>
<rect x="1385" y="1082" width="1155" height="1" fill="#0a0a0a"/>
<rect x="1385" y="1039" width="1155" height="1" fill="#0a0a0a"/>
<rect x="1385" y="1018" width="1155" height="1" fill="#0a0a0a"/>
<rect x="1385" y="996" width="1155" height="1" fill="#0a0a0a"/>
<rect x="1385" y="974" width="1155" height="1" fill="#0a0a0a"/>
<rect x="1385" y="931" width="1155" height="1" fill="#0a0a0a"/>
<rect x="1385" y="1061" width="1155" height="1" fill="#0f0f0f"/>
<rect x="1385" y="1169" width="1155" height="1" fill="#1e1e1e"/>
<rect x="1385" y="953" width="1155" height="1" fill="#1e1e1e"/>
<rect x="1387" y="913" width="1" height="361" fill="#0f0f0f"/>
<rect x="1429" y="913" width="1" height="361" fill="#1e1e1e"/>
<rect x="1471" y="913" width="1" height="361" fill="#0f0f0f"/>
<rect x="1514" y="913" width="1" height="361" fill="#0f0f0f"/>
<rect x="1556" y="913" width="1" height="361" fill="#0f0f0f"/>
<rect x="1598" y="913" width="1" height="361" fill="#0f0f0f"/>
<rect x="1640" y="913" width="1" height="361" fill="#1e1e1e"/>
<rect x="1683" y="913" width="1" height="361" fill="#0f0f0f"/>
<rect x="1725" y="913" width="1" height="361" fill="#0f0f0f"/>
<rect x="1767" y="913" width="1" height="361" fill="#0f0f0f"/>
<rect x="1810" y="913" width="1" height="361" fill="#0f0f0f"/>
<rect x="1852" y="913" width="1" height="361" fill="#1e1e1e"/>
<rect x="1894" y="913" width="1" height="361" fill="#0f0f0f"/>
<rect x="1936" y="913" width="1" height="361" fill="#0f0f0f"/>
<rect x="1979" y="913" width="1" height="361" fill="#0f0f0f"/>
<rect x="2021" y="913" width="1" height="361" fill="#0f0f0f"/>
<rect x="2063" y="913" width="1" height="361" fill="#1e1e1e"/>
<rect x="2105" y="913" width="1" height="361" fill="#0f0f0f"/>
<rect x="2148" y="913" width="1" height="361" fill="#0f0f0f"/>
<rect x="2190" y="913" width="1" height="361" fill="#0f0f0f"/>
<rect x="2232" y="913" width="1" height="361" fill="#0f0f0f"/>
<rect x="2275" y="913" width="1" height="361" fill="#1e1e1e"/>
<rect x="2317" y="913" width="1" height="361" fill="#0f0f0f"/>
<rect x="2359" y="913" width="1" height="361" fill="#0f0f0f"/>
<rect x="2401" y="913" width="1" height="361" fill="#0f0f0f"/>
<rect x="2444" y="913" width="1" height="361" fill="#0f0f0f"/>
<rect x="2486" y="913" width="1" height="361" fill="#1e1e1e"/>
<rect x="2528" y="913" width="1" height="361" fill="#0f0f0f"/>
<rect x="1947" y="913" width="6" height="361" fill="#000"/>
</g>
<g clip-path="url(#cp5)" fill="none" stroke="#8c564b" stroke-width="1" shape-rendering="crispEdges" stroke-linejoin="bevel">
<polyline points="1385.5,988.0 1386.1,966.4 1387.2,952.6 1388.0,943.5 1390.2,943.5 1391.3,952.6 1392.7,960.4 1395.5,960.4 1396.9,972.0 1398.2,996.9 1400.5,997.5 1401.8,1016.3 1403.2,1033.7 1406.0,1035.7 1407.4,1052.3 1408.8,1066.9 1411.5,1067.8 1413.5,1093.2 1416.0,1093.8 1418.7,1113.2 1421.2,1114.0 1423.2,1121.5 1424.8,1128.4 1427.3,1128.4 1429.5,1122.9 1432.3,1122.0 1433.1,1099.3 1434.0,1071.7 1434.8,1046.2 1437.3,1046.2 1439.2,1051.7 1440.6,1055.3 1448.3,1055.3 1449.2,1035.7 1450.0,1016.3 1450.8,1002.4 1458.6,1002.4 1459.4,1010.7 1460.8,1024.0 1464.1,1027.4 1465.0,1046.7 1466.1,1066.1 1466.9,1080.2 1473.8,1080.2 1475.2,1077.2 1477.4,1069.4 1479.9,1067.5 1481.3,1049.5 1482.4,1033.4 1484.9,1033.4 1487.7,1040.6 1490.4,1041.7 1491.8,1055.0 1493.2,1063.3 1496.0,1064.7 1497.9,1085.5 1500.7,1086.9 1502.3,1110.4 1503.4,1122.3 1511.2,1122.3 1514.0,1134.5 1516.7,1135.3 1518.9,1142.8 1521.7,1144.2 1524.5,1150.0 1527.3,1151.4 1530.0,1155.3 1534.7,1155.3 1538.1,1153.3 1538.9,1129.8 1539.7,1104.9 1540.8,1094.6 1543.0,1093.8 1545.0,1088.3 1546.4,1085.5 1548.6,1085.5 1550.5,1093.8 1552.2,1096.6 1554.1,1098.0 1555.5,1113.2 1556.9,1122.3 1563.8,1122.3 1566.6,1134.5 1569.3,1135.3 1572.1,1143.1 1574.9,1144.7 1577.1,1149.2 1580.4,1150.8 1583.2,1154.7 1587.3,1157.5 1590.7,1160.2 1594.3,1164.4 1601.2,1165.0 1603.9,1166.3 1612.2,1166.9 1615.0,1168.3 1633.0,1168.5 1635.8,1169.1 1685.6,1169.1 1687.8,1163.0 1689.2,1159.4 1691.2,1158.9 1692.5,1135.3 1693.9,1124.3 1696.7,1123.7 1698.6,1111.8 1701.4,1111.8 1704.2,1114.6 1707.2,1115.9 1709.1,1121.5 1710.0,1124.8 1712.7,1127.6 1714.4,1133.9 1716.9,1134.8 1719.1,1142.2 1722.7,1144.2 1725.2,1153.3 1731.5,1153.9 1735.7,1158.0 1739.8,1159.7 1744.0,1162.2 1749.5,1164.4 1756.4,1166.3 1762.0,1167.2 1768.9,1168.0 1781.4,1169.1 1802.1,1169.1 1804.1,1167.2 1806.8,1166.3 1808.5,1149.2 1809.6,1134.8 1812.4,1133.9 1814.6,1122.9 1816.0,1119.5 1818.7,1120.1 1822.9,1122.3 1825.7,1129.2 1828.4,1131.2 1831.7,1138.1 1834.5,1140.3 1836.7,1145.6 1839.5,1146.4 1842.3,1151.1 1845.0,1151.9 1847.8,1156.1 1850.6,1156.9 1853.3,1160.2 1857.5,1161.6 1861.7,1163.8 1867.2,1165.2 1874.1,1166.9 1883.8,1168.3 1897.6,1169.1 1939.2,1169.1 1942.5,1165.8 1948.9,1165.8 1950.2,1176.9 1951.9,1199.0 1955.8,1200.4 1958.0,1202.6 1960.8,1201.8 1963.5,1196.2 1966.9,1193.5 1969.1,1185.2 1971.8,1182.4 1973.8,1175.5 1976.5,1172.7 1979.3,1168.0 1981.5,1165.8 1982.9,1149.2 1984.3,1128.7 1987.6,1128.7 1989.0,1138.6 1997.3,1139.5 1999.5,1150.6 2002.8,1151.9 2005.1,1160.2 2007.8,1161.6 2010.6,1165.8 2015.3,1168.0 2018.1,1169.1 2023.6,1169.7 2026.4,1173.5 2026.8,1174.1 2029.8,1174.6 2031.5,1177.8 2034.1,1178.4 2036.4,1182.1 2045.4,1182.3 2048.0,1180.1 2051.9,1180.6 2055.5,1181.6 2058.3,1185.3 2064.8,1185.5 2068.0,1186.8 2070.6,1187.4 2073.8,1189.4 2077.7,1189.4 2079.8,1186.4 2082.4,1186.4 2085.2,1183.4 2098.5,1183.4 2101.3,1181.2 2103.9,1181.0 2106.7,1178.6 2109.3,1178.4 2112.1,1176.1 2115.3,1177.3 2119.6,1178.6 2121.7,1180.1 2124.9,1180.8 2127.7,1183.4 2131.4,1183.8 2135.7,1184.6 2138.9,1187.2 2145.4,1187.7 2148.6,1190.5 2156.1,1190.5 2159.3,1187.7 2161.9,1187.0 2163.6,1181.6 2172.2,1181.6 2174.4,1184.2 2183.0,1184.4 2185.1,1185.5 2193.7,1185.5 2196.9,1182.1 2198.6,1183.4 2201.2,1181.0 2203.4,1180.6 2205.9,1178.0 2209.8,1177.3 2211.5,1174.3 2215.2,1174.1 2216.3,1173.5 2224.8,1173.3 2227.0,1172.4 2232.4,1172.2 2233.4,1171.3 2240.5,1171.3 2242.7,1176.9 2247.4,1178.4 2250.6,1178.4 2254.9,1177.3 2259.2,1175.4 2263.5,1175.0 2267.8,1173.7 2272.1,1173.7 2274.7,1175.2 2277.5,1175.6 2280.7,1178.6 2409.6,1178.6 2410.9,1182.7 2411.8,1187.2 2416.1,1187.4 2418.2,1188.3 2426.2,1188.3 2428.3,1186.4 2431.1,1185.9 2433.2,1185.3 2437.5,1185.5 2439.7,1186.4 2442.9,1186.8 2445.1,1187.7 2447.6,1187.2 2449.4,1185.5 2452.2,1185.1 2455.2,1182.7 2458.0,1182.1 2460.5,1179.5 2463.3,1179.1 2465.5,1177.1 2477.3,1177.1 2479.4,1179.5 2481.2,1181.4 2488.0,1181.4 2491.3,1184.4 2539.0,1184.4"/>
</g>
<g clip-path="url(#cp5)"><line x1="1950" y1="905" x2="1950" y2="1274" stroke="#fff" stroke-width="2" stroke-dasharray="10 2" shape-rendering="crispEdges"/>
<rect x="1950" y="1248" width="189" height="26" fill="#000" fill-opacity="0.6"/></g>
<text x="1954" y="1266.4" font-size="12.5" fill="#f0f0f0" textLength="180.3" lengthAdjust="spacing">T1=-3h,17m,42s,675ms,672µs</text>
<rect x="1384" y="913" width="1" height="362" fill="#969696" shape-rendering="crispEdges"/>
<rect x="1384" y="1274" width="1156" height="1" fill="#969696" shape-rendering="crispEdges"/>
<g clip-path="url(#ca5)" font-size="12.5" fill="#f0f0f0" text-anchor="end" letter-spacing="0.45">
<text x="1380.1" y="958.3">20</text>
<text x="1380.1" y="1066.5">10</text>
<text x="1380.1" y="1174.7">0</text>
</g>
<g font-size="12.5" fill="#f0f0f0" text-anchor="middle">
<text x="1429.5" y="1290" textLength="74" lengthAdjust="spacing">-3h,17m,55s</text>
<text x="1640.9" y="1290" textLength="74" lengthAdjust="spacing">-3h,17m,50s</text>
<text x="1852.3" y="1290" textLength="74" lengthAdjust="spacing">-3h,17m,45s</text>
<text x="2063.7" y="1290" textLength="74" lengthAdjust="spacing">-3h,17m,40s</text>
<text x="2275.1" y="1290" textLength="74" lengthAdjust="spacing">-3h,17m,35s</text>
<text x="2486.5" y="1290" textLength="74" lengthAdjust="spacing">-3h,17m,30s</text>
</g>
<text x="1961.3" y="902.9" font-size="12.5" fill="#f0f0f0" text-anchor="middle" textLength="186.5" lengthAdjust="spacing">H1:PSL-POWER_SCALE_OFFSET</text>
<text transform="translate(1353,1094.3) rotate(-90)" font-size="12.5" fill="#f0f0f0" text-anchor="middle" textLength="40.5" lengthAdjust="spacing">counts</text>
<text x="1279.6" y="1331.8" font-size="16" fill="#f4f4f4" text-anchor="middle" textLength="402" lengthAdjust="spacing">t0 = Tue Oct 21 2025 07:45:15 UTC [1445067933.6250]</text>
</svg>
<div class="btn" style="left:2px;width:98px"><svg style="position:absolute;left:9px;top:6px" width="11" height="12" viewBox="0 0 11 12"><path d="M1 1 L9.5 5.6 L1 10.5 Z" fill="#ececec" stroke="#b9b9b9" stroke-width="1"/></svg><span style="position:absolute;left:24.5px;top:0">start online</span></div>
<div class="btn dis" style="left:104px;width:98px"><svg style="position:absolute;left:11px;top:7px" width="10" height="10" viewBox="0 0 10 10"><rect x="0.5" y="0.5" width="8" height="7.5" fill="#f4f4f4" stroke="#cfcfcf"/></svg><span style="position:absolute;left:25.5px;top:0">stop online</span></div>
<div class="btn" style="left:206px;width:98px">reset</div>
<div class="btn" style="left:308px;width:98px">add channels</div>
<div class="btn" style="left:2448px;width:78px">snapshot</div>
<svg style="position:absolute;left:2536px;top:1359px" width="16" height="12" viewBox="0 0 16 12"><path d="M1.8 10 L8 2.2 L14.2 10 Z" fill="#2e2e2e"/></svg>
<div id="st">h1daqnds1:8088  [429233 channels]</div>
<div id="lk"><u>ndscope</u> <u>0.19.3</u> (<u>report bug</u>)</div>
</body></html>
